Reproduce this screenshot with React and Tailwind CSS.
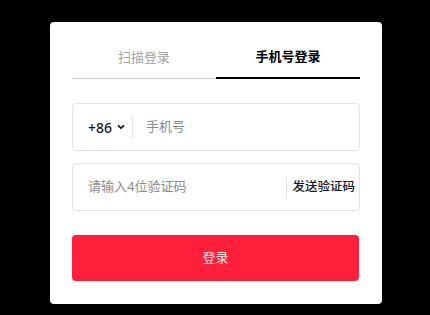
// App.jsx
// Phone-number login card: tab switcher, phone + code inputs, red submit button.
import { useState } from "react";

const font = {
  fontFamily: '"Noto Sans", "Noto Sans CJK SC", sans-serif',
};

export default function App() {
  const [tab, setTab] = useState("phone");

  return (
    <div className="min-h-[315px] w-full bg-black pt-[22px]" style={font}>
      <div className="ml-[50px] h-[282px] w-[332px] rounded-[4px] bg-white px-[22px] pt-[24px]">
        {/* Tabs */}
        <div className="flex w-[288px]">
          <button
            type="button"
            onClick={() => setTab("qr")}
            className={`flex-1 pb-[11px] text-[13px] leading-[20px] ${
              tab === "qr"
                ? "border-b-2 border-black font-semibold text-black"
                : "border-b border-[#cfcfcf] text-[#a3a3a3]"
            }`}
          >
            扫描登录
          </button>
          <button
            type="button"
            onClick={() => setTab("phone")}
            className={`flex-1 pb-[11px] text-[13px] leading-[20px] ${
              tab === "phone"
                ? "border-b-2 border-black font-semibold text-black"
                : "border-b border-[#cfcfcf] text-[#a3a3a3]"
            }`}
          >
            手机号登录
          </button>
        </div>

        {/* Phone number */}
        <div className="mt-[24px] flex h-[48px] w-[288px] items-center rounded-[4px] border border-[#e2e2e2] pl-[15px]">
          <span className="text-[14px] font-medium text-[#161823]">+86</span>
          <svg
            viewBox="0 0 10 10"
            className="ml-[5px] h-[8px] w-[8px]"
            fill="none"
            stroke="#161823"
            strokeWidth="2.2"
            strokeLinecap="round"
            strokeLinejoin="round"
          >
            <path d="M2 3.5 5 6.5 8 3.5" />
          </svg>
          <span className="ml-[7px] h-[21px] w-px bg-[#e0e0e0]" />
          <input
            type="tel"
            placeholder="手机号"
            className="ml-[13px] flex-1 bg-transparent text-[13px] text-black outline-none placeholder:text-[#8a8a8a]"
          />
        </div>

        {/* Verification code */}
        <div className="mt-[12px] flex h-[48px] w-[288px] items-center rounded-[4px] border border-[#e2e2e2] pl-[15px] pr-[4px]">
          <input
            type="text"
            placeholder="请输入4位验证码"
            className="min-w-0 flex-1 bg-transparent text-[13px] text-black outline-none placeholder:text-[#8a8a8a]"
          />
          <span className="h-[21px] w-px bg-[#e0e0e0]" />
          <button
            type="button"
            className="ml-[5px] text-[12.5px] font-medium text-[#161823]"
          >
            发送验证码
          </button>
        </div>

        {/* Submit */}
        <button
          type="button"
          className="mt-[24px] h-[46px] w-[287px] rounded-[4px] bg-[#fe1f3b] text-[13px] text-white/90"
        >
          登录
        </button>
      </div>
    </div>
  );
}
